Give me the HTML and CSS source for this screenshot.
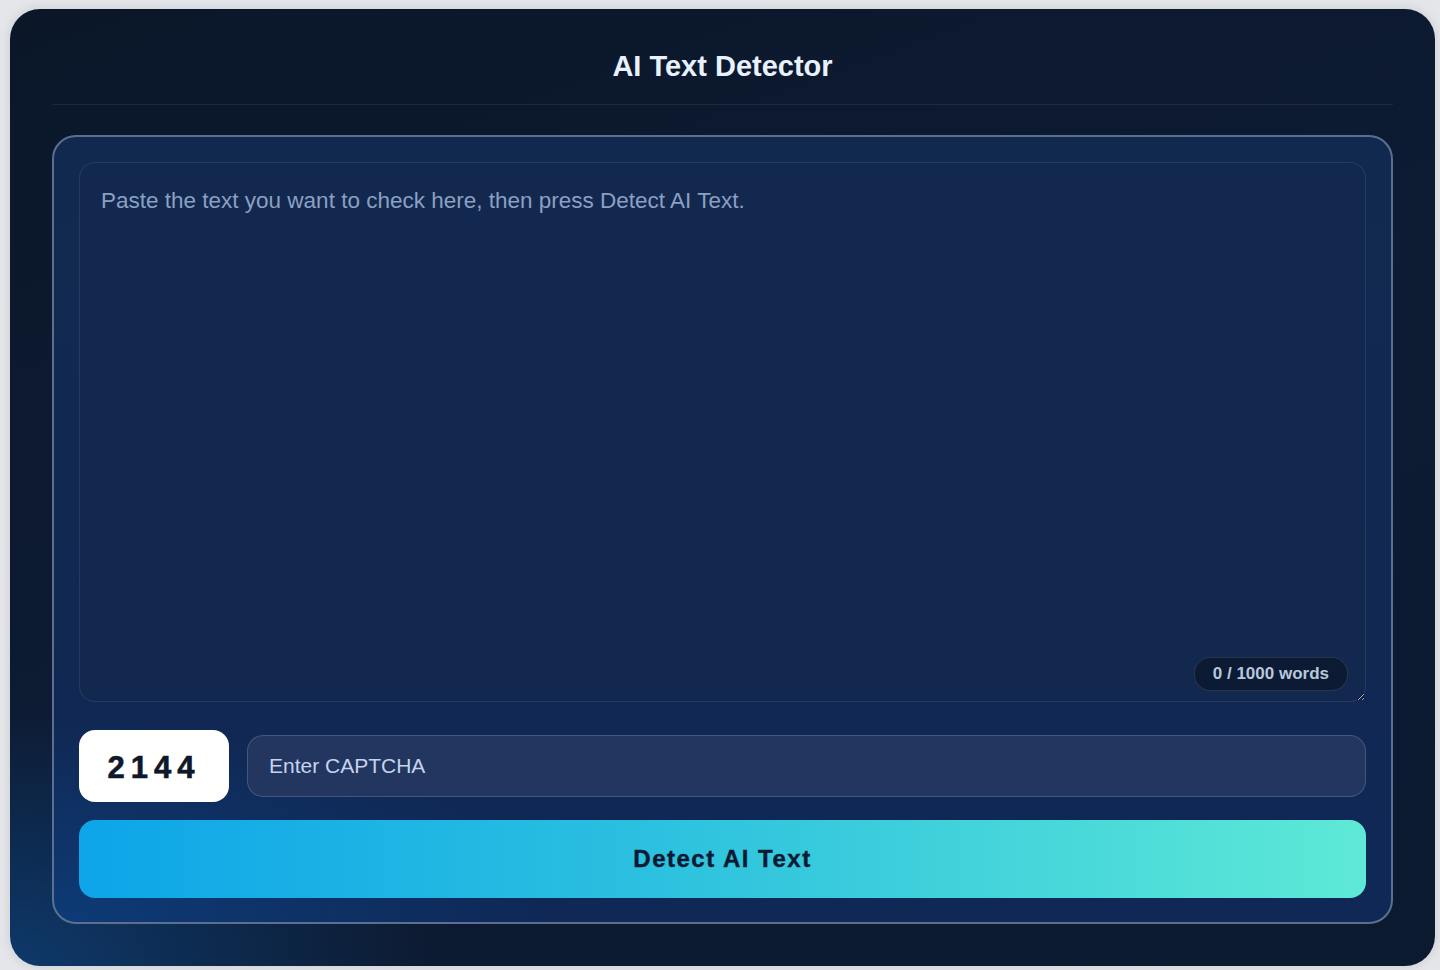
FILE: index.html
```html
<!DOCTYPE html>
<html lang="en">
<head>
  <meta charset="UTF-8" />
  <meta name="viewport" content="width=device-width, initial-scale=1.0" />
  <title>AI Text Detector</title>
  <link rel="stylesheet" href="styles.css">
</head>
<body>

  <div class="detector-card">
    <header class="detector-header">
      <h1>AI Text Detector</h1>
    </header>

    <form class="detector-panel" id="detector-form">
      <div class="text-wrap">
        <textarea id="input-text" placeholder="Paste the text you want to check here, then press Detect AI Text."></textarea>
        <span class="word-count" id="word-count">0 / 1000 words</span>
      </div>

      <div class="captcha-row">
        <div class="captcha-code" id="captcha-code">2144</div>
        <input type="text" id="captcha-input" class="captcha-input" placeholder="Enter CAPTCHA">
      </div>

      <button type="submit" class="detect-btn">Detect AI Text</button>
    </form>
  </div>

</body>
</html>
```

FILE: styles.css
```css
html, body {
  height: 100%;
}
body {
  font-family: "Liberation Sans", Arial, sans-serif;
  background-color: #e4e6ea;
  margin: 0;
  padding: 9px 5px 4px 10px;
  box-sizing: border-box;
}
.detector-card {
  height: 957px;
  box-sizing: border-box;
  padding: 0 42px 42px;
  border-radius: 30px;
  background:
    radial-gradient(ellipse 420px 260px at 0% 100%, rgba(14, 70, 130, 0.7), rgba(14, 70, 130, 0) 100%),
    linear-gradient(160deg, #0b1729 0%, #0d1b33 50%, #0c1a30 100%);
  box-shadow: 0 0 12px rgba(0, 0, 0, 0.12);
  display: flex;
  flex-direction: column;
}
.detector-header {
  height: 97px;
  border-bottom: 1px solid rgba(148, 163, 184, 0.12);
  display: flex;
  align-items: center;
  justify-content: center;
  margin-bottom: 30px;
}
.detector-header h1 {
  margin: 0;
  padding-top: 20px;
  font-size: 29px;
  font-weight: bold;
  color: #e8f1ff;
}
.detector-panel {
  flex: 1;
  display: flex;
  flex-direction: column;
  padding: 25px 25px 24px;
  border: 2px solid #5b6f92;
  border-radius: 24px;
  background:
    radial-gradient(ellipse 500px 200px at 0% 100%, rgba(12, 72, 140, 0.6), rgba(12, 72, 140, 0) 100%),
    linear-gradient(180deg, #12294f 0%, #112852 60%, #0f2856 100%);
}
.text-wrap {
  position: relative;
  height: 540px;
}
textarea {
  width: 100%;
  height: 100%;
  box-sizing: border-box;
  padding: 24px 21px;
  border: 1px solid rgba(148, 163, 184, 0.16);
  border-radius: 16px;
  background: #13284f;
  color: #dbe6f7;
  font-family: "Liberation Sans", Arial, sans-serif;
  font-size: 22.5px;
  line-height: 28px;
  resize: vertical;
  outline: none;
}
textarea::placeholder {
  color: #8ba0c2;
}
.word-count {
  position: absolute;
  right: 18px;
  bottom: 11px;
  padding: 6px 18px;
  border-radius: 16px;
  border: 1px solid rgba(148, 163, 184, 0.2);
  background: #0c1a33;
  color: #b9c7dd;
  font-size: 17px;
  font-weight: bold;
}
.captcha-row {
  display: flex;
  align-items: center;
  gap: 18px;
  margin-top: 28px;
}
.captcha-code {
  width: 150px;
  height: 72px;
  flex-shrink: 0;
  display: flex;
  align-items: center;
  justify-content: center;
  border-radius: 16px;
  background: #ffffff;
  color: #0f172a;
  font-size: 31px;
  font-weight: bold;
  letter-spacing: 6px;
  padding-top: 3px;
  box-sizing: border-box;
  -webkit-text-stroke: 0.6px #0f172a;
}
.captcha-input {
  flex: 1;
  height: 62px;
  box-sizing: border-box;
  padding: 0 21px;
  border: 1px solid rgba(148, 163, 184, 0.3);
  border-radius: 16px;
  background: #233660;
  color: #dbe6f7;
  font-family: "Liberation Sans", Arial, sans-serif;
  font-size: 21px;
  outline: none;
}
.captcha-input::placeholder {
  color: #c5d4ee;
}
.detect-btn {
  margin-top: 18px;
  height: 78px;
  border: none;
  border-radius: 16px;
  background: linear-gradient(90deg, #0ea5e9 0%, #2cc1df 45%, #5ee9d6 100%);
  color: #0b1a33;
  font-family: "Liberation Sans", Arial, sans-serif;
  font-size: 24px;
  font-weight: bold;
  letter-spacing: 1.5px;
  -webkit-text-stroke: 0.4px #0b1a33;
  cursor: pointer;
}
```
